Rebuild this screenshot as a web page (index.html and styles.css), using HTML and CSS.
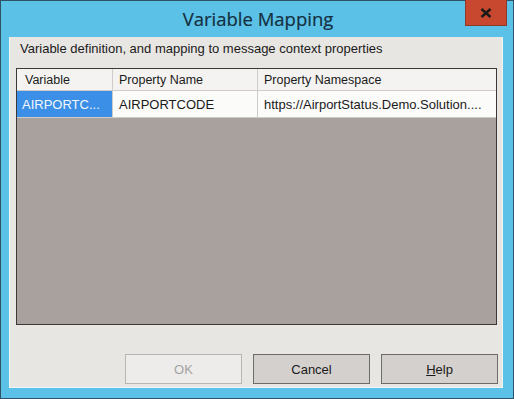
FILE: index.html
```html
<!DOCTYPE html>
<html>
<head>
<meta charset="utf-8">
<link rel="stylesheet" href="styles.css">
</head>
<body>
<div class="window">
  <div class="titlebar">
    <div class="title">Variable Mapping</div>
    <div class="close"><svg width="12" height="10" viewBox="0 0 12 10"><path d="M1.5 1 L10.5 9 M10.5 1 L1.5 9" stroke="#1e1a18" stroke-width="2.6" stroke-linecap="butt"/></svg></div>
  </div>
  <div class="client">
    <div class="caption">Variable definition, and mapping to message context properties</div>
    <div class="grid">
      <div class="row head">
        <div class="cell c1">Variable</div>
        <div class="cell c2">Property Name</div>
        <div class="cell c3">Property Namespace</div>
      </div>
      <div class="row data">
        <div class="cell c1 sel">AIRPORTC...</div>
        <div class="cell c2">AIRPORTCODE</div>
        <div class="cell c3">https://AirportStatus.Demo.Solution....</div>
      </div>
      <div class="empty"></div>
    </div>
    <div class="buttons">
      <div class="btn disabled">OK</div>
      <div class="btn">Cancel</div>
      <div class="btn"><u>H</u>elp</div>
    </div>
  </div>
</div>
</body>
</html>
```
FILE: styles.css
```css
html, body { margin: 0; padding: 0; }
body { width: 514px; height: 399px; overflow: hidden; background: #5bc1e7; font-family: "Liberation Sans", Arial, sans-serif; }
.window {
  box-sizing: border-box;
  width: 514px; height: 399px;
  background: #5cc1e6;
  border: 1px solid #2f5265;
  display: flex; flex-direction: column;
}
.titlebar {
  height: 36px; flex: none;
  position: relative;
  display: flex; align-items: center; justify-content: center;
}
.title {
  font-family: "Open Sans", "Noto Sans", sans-serif;
  font-size: 18.5px; color: #142f40;
  margin-top: -1px; margin-left: 2px;
  -webkit-text-stroke: 0.2px #142f40;
}
.close {
  position: absolute; right: 6px; top: -1px;
  width: 42px; height: 26px;
  background: #c8482f;
  border: 1px solid #8e3a2a; border-top: none;
  box-sizing: border-box;
  display: flex; align-items: center; justify-content: center;
}
.client {
  flex: 1;
  margin: 0 10px 10px 8px;
  background: #e8e6e3;
  border: 1px solid #eef6f9;
  border-top: none;
  display: flex; flex-direction: column;
}
.caption {
  font-size: 13px; color: #1a1a1a;
  padding: 4px 0 0 10px; height: 27px; box-sizing: border-box;
}
.grid {
  margin: 4px 5px 0 6px;
  height: 257px;
  border: 1px solid #3d3835;
  background: #a9a19d;
  display: flex; flex-direction: column;
  box-sizing: border-box;
}
.row { display: flex; flex: none; }
.head { height: 21px; background: #f4f3f1; border-bottom: 1px solid #cfcbc7; }
.data { height: 26px; background: #fbfbfa; border-bottom: 1px solid #cfcbc7; }
.cell {
  font-size: 13px; color: #1a1a1a;
  display: flex; align-items: center;
  padding-left: 8px; box-sizing: border-box;
  border-right: 1px solid #cfcbc7;
  white-space: nowrap; overflow: hidden;
}
.head .cell { font-size: 12.5px; }
.c1 { width: 96px; }
.c2 { width: 145px; padding-left: 6px; }
.c3 { flex: 1; padding-left: 6px; border-right: none; }
.sel { background: #3b8fe7; color: #f4f8fd; padding-left: 5px; }
.empty { flex: 1; }
.buttons {
  display: flex; justify-content: flex-end; gap: 11px;
  margin: 29px 4px 0 0;
}
.btn {
  width: 117px; height: 30px; box-sizing: border-box;
  border: 1px solid #6f6b68;
  background: #d4d0cd;
  font-size: 13px; color: #1a1a1a;
  display: flex; align-items: center; justify-content: center;
}
.btn.disabled {
  border-color: #b8b5b2; background: #eeecea; color: #a3a3a3;
}
```
